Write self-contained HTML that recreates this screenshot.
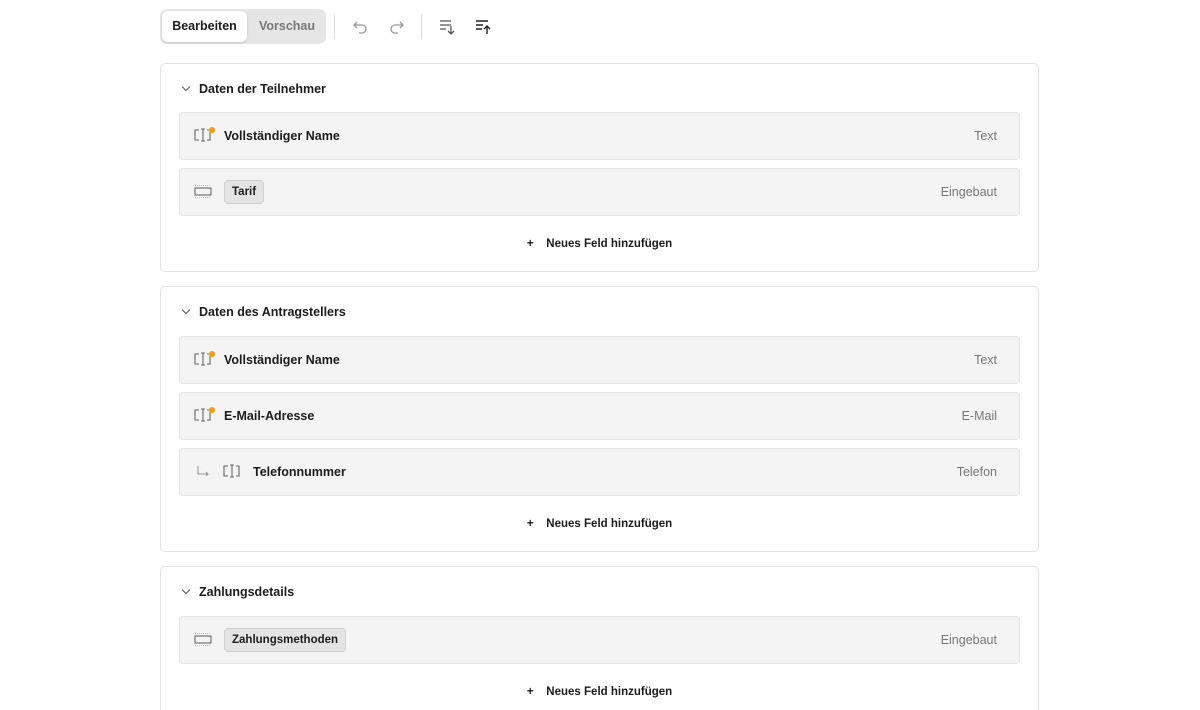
<!DOCTYPE html><html><head><style>
html,body{margin:0;width:1200px;height:710px;overflow:hidden}
body{background:#fff;font-family:"Liberation Sans",sans-serif;color:#1c1c1c;position:relative}
.abs{position:absolute}
.seg{left:160px;top:9px;width:166px;height:35px;background:#e6e6e6;border-radius:7px}
.seg .on{position:absolute;left:2px;top:2px;width:85px;height:31px;background:#fff;border-radius:6px;box-shadow:0 1px 2px rgba(0,0,0,.15);font-size:12.5px;font-weight:bold;line-height:31px;text-align:center}
.seg .off{position:absolute;left:90px;top:2px;width:74px;line-height:35px;top:0;font-size:12.5px;font-weight:bold;color:#777;text-align:center}
.card{left:160px;width:877px;border:1px solid #e3e3e3;border-radius:5px;background:#fff}
.hd{position:absolute;left:20px;font-size:12.5px;font-weight:bold}
.hd:before{content:"";display:inline-block;width:5px;height:5px;border-right:1.3px solid #555;border-bottom:1.3px solid #555;transform:rotate(45deg);margin:0 10px 3px 2px}
.row{position:absolute;left:18px;width:839px;height:46px;background:#f4f4f4;border:1px solid #e4e4e4;border-radius:4px}
.row .n{position:absolute;left:44px;top:16px;font-size:12.5px;font-weight:bold}
.row .t{position:absolute;right:22px;top:16px;font-size:12.5px;color:#777}
.tag{position:absolute;left:44px;top:11px;padding:0 7px;height:22px;line-height:22px;background:#e4e4e4;border:1px solid #d2d2d2;border-radius:4px;font-size:11.5px;font-weight:bold}
.add{position:absolute;left:0;width:100%;text-align:center;font-size:11.5px;font-weight:bold}
.ic{position:absolute;left:14px;top:14px}
</style></head><body>
<div class="abs seg"><div class="on">Bearbeiten</div><div class="off">Vorschau</div></div>
<div class="abs" style="left:334px;top:14px;width:1px;height:25px;background:#ddd"></div>
<div class="abs" style="left:421px;top:14px;width:1px;height:25px;background:#ddd"></div>
<svg class="abs" style="left:352px;top:18px" width="18" height="18" fill="none" stroke="#999" stroke-width="1.3"><path d="M5 4L2 7l3 3M2 7h8a4 4 0 010 8H7"/></svg>
<svg class="abs" style="left:387px;top:18px" width="18" height="18" fill="none" stroke="#999" stroke-width="1.3"><path d="M13 4l3 3-3 3M16 7H8a4 4 0 000 8h3"/></svg>
<svg class="abs" style="left:439px;top:18px" width="18" height="18" fill="none" stroke="#555" stroke-width="1.3"><path d="M1 3h11M1 7h11M1 11h6M12 8v8M9 13l3 3 3-3"/></svg>
<svg class="abs" style="left:475px;top:18px" width="18" height="18" fill="none" stroke="#222" stroke-width="1.4"><path d="M1 3h12M1 7h7M1 11h6M12 8v8M9 11l3-3 3 3"/></svg>

<svg width="0" height="0" style="position:absolute"><defs>
<g id="txt"><path d="M5 3H1v10h4M13 3h3v10h-3M7 2h4M7 14h4M9 2v12" fill="none" stroke="#666" stroke-width="1.1"/></g>
<g id="blt"><rect x="1" y="5" width="16" height="7" fill="none" stroke="#666" stroke-width="1.1"/><path d="M1 2.5h16M1 14.5h16" stroke="#aaa" stroke-width=".8" stroke-dasharray="1 1"/></g>
</defs></svg>

<div class="abs card" style="top:63px;height:207px">
<div class="hd" style="top:18px">Daten der Teilnehmer</div>
<div class="row" style="top:48px"><svg class="ic" width="22" height="18"><use href="#txt"/><circle cx="18" cy="3" r="3" fill="#f59e0b"/></svg><span class="n">Vollständiger Name</span><span class="t">Text</span></div>
<div class="row" style="top:104px"><svg class="ic" width="22" height="18"><use href="#blt"/></svg><span class="tag">Tarif</span><span class="t">Eingebaut</span></div>
<div class="add" style="top:174px">+&nbsp;&nbsp;&nbsp; Neues Feld hinzufügen</div>
</div>

<div class="abs card" style="top:286px;height:264px">
<div class="hd" style="top:18px">Daten des Antragstellers</div>
<div class="row" style="top:49px"><svg class="ic" width="22" height="18"><use href="#txt"/><circle cx="18" cy="3" r="3" fill="#f59e0b"/></svg><span class="n">Vollständiger Name</span><span class="t">Text</span></div>
<div class="row" style="top:105px"><svg class="ic" width="22" height="18"><use href="#txt"/><circle cx="18" cy="3" r="3" fill="#f59e0b"/></svg><span class="n">E-Mail-Adresse</span><span class="t">E-Mail</span></div>
<div class="row" style="top:161px"><svg class="ic" width="20" height="18" style="left:16px"><path d="M2 3v8h10M10 9l2 2-2 2" fill="none" stroke="#999" stroke-width="1.1"/></svg><svg class="ic" width="20" height="18" style="left:43px"><use href="#txt"/></svg><span class="n" style="left:73px">Telefonnummer</span><span class="t">Telefon</span></div>
<div class="add" style="top:231px">+&nbsp;&nbsp;&nbsp; Neues Feld hinzufügen</div>
</div>

<div class="abs card" style="top:566px;height:160px">
<div class="hd" style="top:18px">Zahlungsdetails</div>
<div class="row" style="top:49px"><svg class="ic" width="22" height="18"><use href="#blt"/></svg><span class="tag">Zahlungsmethoden</span><span class="t">Eingebaut</span></div>
<div class="add" style="top:119px">+&nbsp;&nbsp;&nbsp; Neues Feld hinzufügen</div>
</div>
</body></html>
